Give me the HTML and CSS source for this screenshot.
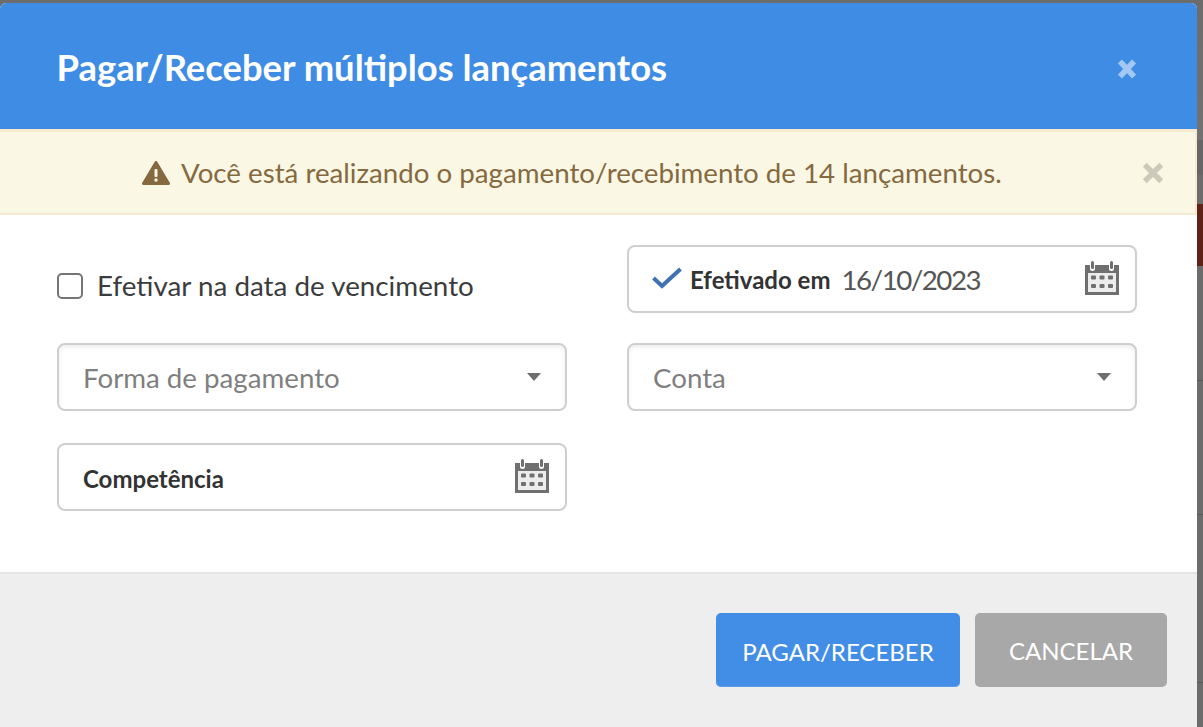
FILE: index.html
```html
<!DOCTYPE html>
<html lang="pt-BR">
<head>
<meta charset="utf-8">
<title>Pagar/Receber múltiplos lançamentos</title>
<link rel="stylesheet" href="styles.css">
</head>
<body>
<div class="modal">
  <header class="modal-header">
    <h1 class="modal-title">Pagar/Receber múltiplos lançamentos</h1>
    <svg class="header-close" viewBox="0 0 18 20" aria-hidden="true"><path d="M2 2.500 16 17.500M16 2.500 2 17.500"/></svg>
  </header>
  <div class="alert">
    <svg class="alert-icon" viewBox="0 0 28 24" aria-hidden="true"><path class="tri" d="M14 1.500 1.500 22.500H26.500Z"/><rect class="mark" x="12.500" y="8" width="3" height="8" rx="1"/><circle class="mark" cx="14" cy="19" r="1.700"/></svg>
    <span class="alert-text">Você está realizando o pagamento/recebimento de 14 lançamentos.</span>
    <svg class="alert-close" viewBox="0 0 20 20" aria-hidden="true"><path d="M2.500 2.500 17.500 17.500M17.500 2.500 2.500 17.500"/></svg>
  </div>
  <main class="modal-body">
    <div class="form-grid">
      <label class="check-row"><span class="checkbox"></span><span>Efetivar na data de vencimento</span></label>
      <div class="field date-field">
        <svg class="check-icon" viewBox="0 0 30 22" aria-hidden="true"><path d="M1.500 11 10 19 28.500 2"/></svg>
        <span class="field-label">Efetivado em</span>
        <span class="field-value">16/10/2023</span>
        <svg class="calendar" viewBox="0 0 34 34" aria-hidden="true"><use href="#cal"/></svg>
      </div>
      <div class="field select-field"><span class="placeholder">Forma de pagamento</span><span class="caret"></span></div>
      <div class="field select-field"><span class="placeholder">Conta</span><span class="caret"></span></div>
      <div class="field comp-field">
        <span class="field-label comp-label">Competência</span>
        <svg class="calendar" viewBox="0 0 34 34" aria-hidden="true"><use href="#cal"/></svg>
      </div>
    </div>
  </main>
  <footer class="modal-footer">
    <button class="btn btn-primary" type="button"><span>PAGAR/RECEBER</span></button>
    <button class="btn btn-cancel" type="button">CANCELAR</button>
  </footer>
</div>
<svg class="defs" aria-hidden="true"><defs>
  <g id="cal">
    <path fill="#6f6f6f" d="M0 4H5V7.500A2.500 2.500 0 0 0 10 7.500V4H24V7.500A2.500 2.500 0 0 0 29 7.500V4H34V34H0Z"/>
    <rect x="6" y="0" width="3" height="8" rx="1.500" fill="#6f6f6f"/>
    <rect x="25" y="0" width="3" height="8" rx="1.500" fill="#6f6f6f"/>
    <rect x="3" y="12" width="28" height="19" fill="#ececec"/>
    <g fill="#6f6f6f">
      <rect x="6" y="14.500" width="5" height="4" rx="1"/><rect x="14.500" y="14.500" width="5" height="4" rx="1"/><rect x="23" y="14.500" width="5" height="4" rx="1"/>
      <rect x="6" y="23" width="5" height="4" rx="1"/><rect x="14.500" y="23" width="5" height="4" rx="1"/><rect x="23" y="23" width="5" height="4" rx="1"/>
    </g>
  </g>
</defs></svg>
</body>
</html>
```
FILE: styles.css
```css
* { box-sizing: border-box; }
html, body { margin: 0; height: 100%; overflow: hidden; }
body {
  padding-top: 3px;
  font-family: "Lato", "Liberation Sans", sans-serif;
  background: linear-gradient(to bottom,
    #6c6c6c 0, #727272 140px, #666 140px, #666 175px, #6c6c6c 175px, #6c6c6c 204px,
    #5e2219 204px, #5e2219 266px,
    #6c6c6c 266px, #6c6c6c 380px, #595959 380px, #595959 381px,
    #6c6c6c 381px, #6c6c6c 514px, #595959 514px, #595959 515px,
    #6c6c6c 515px, #6c6c6c 682px, #595959 682px, #595959 683px,
    #6c6c6c 683px, #6c6c6c 100%);
}
.modal {
  width: 1197px;
  height: 724px;
  display: flex;
  flex-direction: column;
  background: #fff;
  border-radius: 6px 6px 0 0;
  overflow: hidden;
}
.modal-header {
  height: 126px;
  flex: none;
  display: flex;
  align-items: center;
  justify-content: space-between;
  padding: 2px 61px 0 56.500px;
  background: #3f8ce5;
}
.modal-title { margin: 0; font-size: 36.400px; font-weight: 700; color: #fff; }
.header-close { width: 18px; height: 20px; margin-top: 4px; fill: none; stroke: #a3c8f3; stroke-width: 5.500; }
.alert {
  height: 86px;
  flex: none;
  display: flex;
  align-items: center;
  padding: 1px 31px 0 142px;
  background: #fbf7e5;
  border: 2px solid #f6ebd1;
  border-top-width: 3px;
  border-left: 0;
  color: #85693f;
  font-size: 27.700px;
}
.alert-icon { width: 28px; height: 24px; margin-right: 11px; }
.alert-icon .tri { fill: #85693f; stroke: #85693f; stroke-width: 3; stroke-linejoin: round; }
.alert-icon .mark { fill: #fbf7e5; }
.alert-text { flex: 1; margin-top: -2px; }
.alert-close { width: 22px; height: 22px; fill: none; stroke: #cdcabb; stroke-width: 5; }
.modal-body { flex: 1; padding: 30px 60px 0 57px; }
.form-grid {
  display: grid;
  grid-template-columns: 510px 510px;
  grid-template-rows: 68px 68px 68px;
  column-gap: 60px;
  row-gap: 30px;
}
.check-row { display: flex; align-items: center; font-size: 27.800px; color: #3c3c3c; padding-top: 12px; }
.checkbox {
  width: 26px;
  height: 26px;
  margin-top: 2px;
  margin-right: 14px;
  border: 2px solid #757575;
  border-radius: 5px;
}
.field {
  display: flex;
  align-items: center;
  border: 2px solid #cfcfcf;
  border-radius: 8px;
  background: #fff;
  padding: 0 16px 0 24px;
}
.field-label { font-size: 24px; font-weight: 700; color: #333; }
.field-value { flex: 1; margin-left: 11px; font-size: 27.700px; letter-spacing: -1.500px; color: #555; }
.check-icon { width: 30px; height: 22px; margin-left: -1px; margin-right: 8px; margin-bottom: 2px; fill: none; stroke: #3f72b2; stroke-width: 4; }
.calendar { width: 34px; height: 34px; flex: none; margin-bottom: 3px; }
.select-field { justify-content: space-between; box-shadow: inset 0 2px 4px rgba(0,0,0,.08); padding-right: 24px; }
.placeholder { font-size: 27.700px; color: #7f7f7f; }
.caret { width: 0; height: 0; border: 7px solid transparent; border-top: 8px solid #6e6e6e; border-bottom: 0; }
.comp-field { grid-row: 3; grid-column: 1; justify-content: space-between; margin-top: 2px; margin-bottom: -2px; }
.comp-label { padding-top: 2px; }
.modal-footer {
  height: 155px;
  flex: none;
  display: flex;
  justify-content: flex-end;
  align-items: flex-start;
  gap: 15px;
  padding: 39px 30px 0 0;
  background: #eeeeee;
  border-top: 2px solid #e4e4e4;
}
.btn {
  height: 74px;
  border: 0;
  border-radius: 5px;
  font-family: inherit;
  font-size: 24px;
  color: #fff;
}
.btn-primary { width: 244px; background: #428ee6; box-shadow: inset 0 -1px 0 #5a9ded; }
.btn-primary span { position: relative; top: 1px; }
.btn-cancel { width: 192px; background: #a8a8a8; }
.defs { position: absolute; width: 0; height: 0; }
```
